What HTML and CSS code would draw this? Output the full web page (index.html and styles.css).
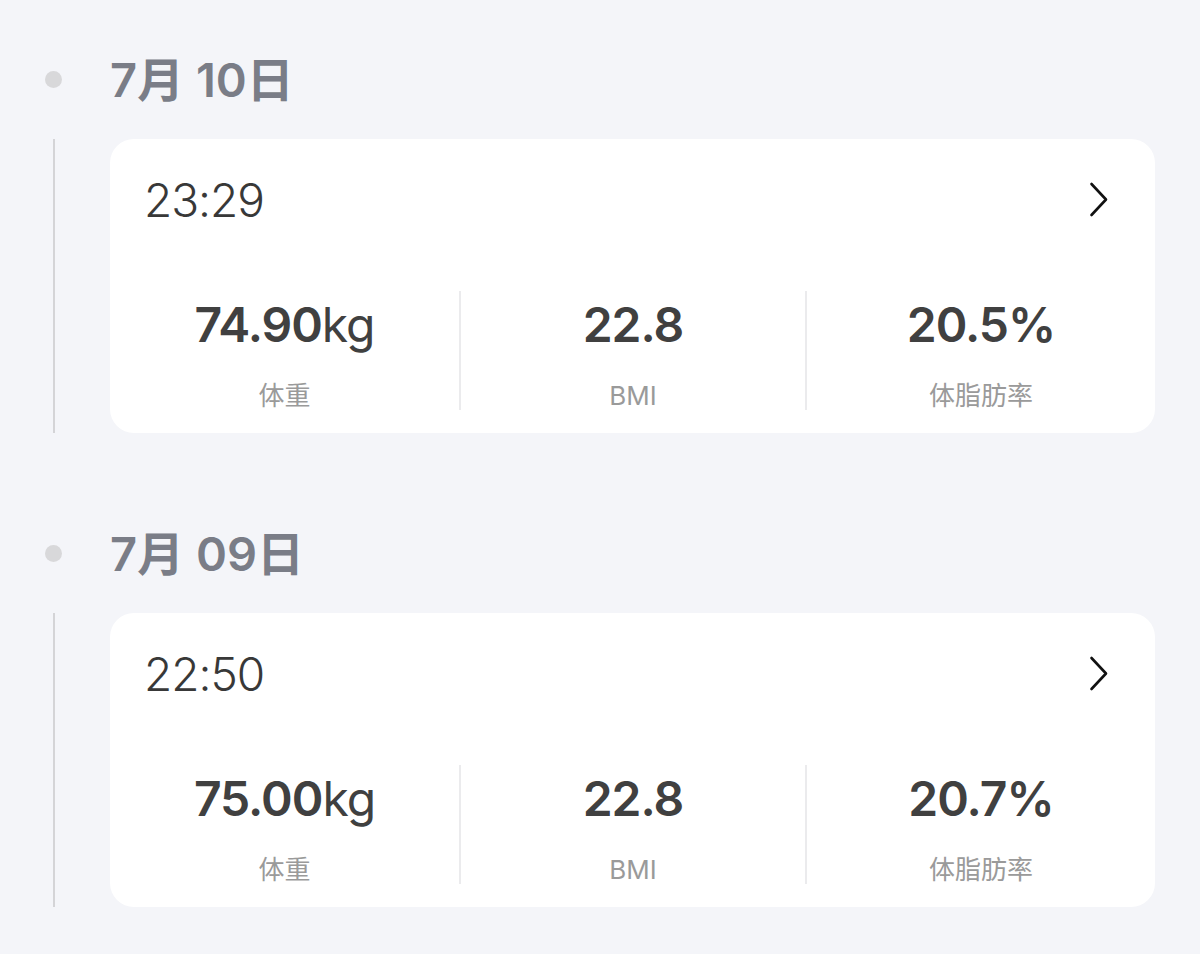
FILE: index.html
```html
<!DOCTYPE html>
<html lang="zh-CN">
<head>
  <meta charset="UTF-8">
  <meta name="viewport" content="width=device-width, initial-scale=1">
  <title>体重记录</title>
  <link rel="stylesheet" href="styles.css">
</head>
<body>

  <div class="timeline">

    <section class="day">
      <div class="day-head">
        <span class="dot"></span>
        <h2 class="date">7月 10日</h2>
      </div>
      <div class="day-body">
        <div class="rail"></div>
        <div class="record">
          <div class="record-top">
            <span class="time">23:29</span>
            <svg class="chevron" width="20" height="36" viewBox="0 0 20 36">
              <polyline points="2.5,2 17,17.5 2.5,33" fill="none" stroke="#111" stroke-width="2.6" stroke-linecap="round" stroke-linejoin="round"/>
            </svg>
          </div>
          <div class="stats">
            <div class="stat">
              <div class="value">74.90<span class="unit">kg</span></div>
              <div class="label">体重</div>
            </div>
            <div class="stat">
              <div class="value">22.8</div>
              <div class="label">BMI</div>
            </div>
            <div class="stat">
              <div class="value">20.5%</div>
              <div class="label">体脂肪率</div>
            </div>
          </div>
        </div>
      </div>
    </section>

    <section class="day">
      <div class="day-head">
        <span class="dot"></span>
        <h2 class="date">7月 09日</h2>
      </div>
      <div class="day-body">
        <div class="rail"></div>
        <div class="record">
          <div class="record-top">
            <span class="time">22:50</span>
            <svg class="chevron" width="20" height="36" viewBox="0 0 20 36">
              <polyline points="2.5,2 17,17.5 2.5,33" fill="none" stroke="#111" stroke-width="2.6" stroke-linecap="round" stroke-linejoin="round"/>
            </svg>
          </div>
          <div class="stats">
            <div class="stat">
              <div class="value">75.00<span class="unit">kg</span></div>
              <div class="label">体重</div>
            </div>
            <div class="stat">
              <div class="value">22.8</div>
              <div class="label">BMI</div>
            </div>
            <div class="stat">
              <div class="value">20.7%</div>
              <div class="label">体脂肪率</div>
            </div>
          </div>
        </div>
      </div>
    </section>

  </div>

</body>
</html>
```

FILE: styles.css
```css
body {
  margin: 0;
  background: #f4f5f9;
  font-family: Inter, "Noto Sans CJK SC", sans-serif;
  color: #3b3b3b;
}

.timeline {
  padding: 19px 45px 0 45px;
}

.day + .day {
  margin-top: 60px;
}

/* date row with the grey bullet */
.day-head {
  display: flex;
  align-items: center;
  height: 120px;
}

.dot {
  width: 17px;
  height: 17px;
  border-radius: 50%;
  background: #d8d8da;
  flex-shrink: 0;
}

.date {
  margin: 0 0 0 48px;
  font-size: 47px;
  font-weight: 600;
  color: #7a7d87;
  line-height: 1;
}

.day-body {
  display: flex;
}

.rail {
  width: 2px;
  margin-left: 8px;
  background: #d4d4d7;
  flex-shrink: 0;
}

/* white record card */
.record {
  flex: 1;
  margin-left: 55px;
  background: white;
  border-radius: 24px;
  padding: 33px 0 23px;
}

.record-top {
  display: flex;
  align-items: center;
  justify-content: space-between;
  height: 56px;
  padding: 0 46px 0 34px;
}

.time {
  font-size: 46px;
  line-height: 56px;
  font-weight: 300;
  letter-spacing: -1px;
  color: #383838;
}

.stats {
  display: grid;
  grid-template-columns: 349px 346px 1fr;
  margin-top: 63px;
}

.stat {
  height: 119px;
  padding-top: 6px;
  box-sizing: border-box;
  display: flex;
  flex-direction: column;
  align-items: center;
}

.stat + .stat {
  border-left: 2px solid #ebebed;
}

.value {
  font-size: 48px;
  line-height: 56px;
  font-weight: 600;
  color: #404040;
  letter-spacing: -1px;
}

.unit {
  font-weight: 400;
}

.label {
  margin-top: 28px;
  font-size: 26px;
  line-height: 30px;
  color: #9a9a9a;
}
```
